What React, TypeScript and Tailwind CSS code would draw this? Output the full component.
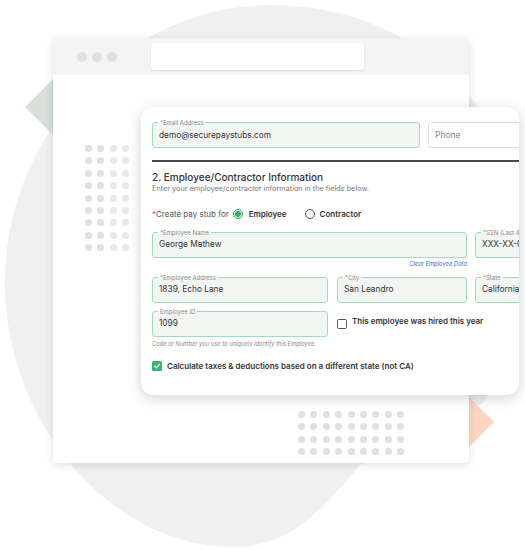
import React from "react";

const font = { fontFamily: "Inter, 'Noto Sans', sans-serif" };

const Field = ({
  label,
  value,
  width,
}: {
  label: string;
  value: string;
  width: string;
}) => {
  return (
    <div
      className={`relative h-[26px] shrink-0 rounded-[3px] border border-[#9fdcbd] bg-[#f2f6f2] flex items-center pl-[6px] ${width}`}
    >
      <span className="absolute -top-[4px] left-[5px] px-[2px] text-[6px] leading-[7px] text-[#8a8a8a] bg-[linear-gradient(to_bottom,#ffffff_55%,#f2f6f2_55%)] whitespace-nowrap">
        {label}
      </span>
      <span className="text-[8.3px] text-[#333] whitespace-nowrap">{value}</span>
    </div>
  );
};

const Check = () => (
  <svg width="8" height="8" viewBox="0 0 10 10">
    <path d="M2 5.2 L4.2 7.3 L8.2 2.8" fill="none" stroke="#fff" strokeWidth="1.6" strokeLinecap="round" strokeLinejoin="round" />
  </svg>
);

const Dots = ({ cols, rows, light }: { cols: number; rows: number; light?: boolean }) => {
  const items = [];
  for (let r = 0; r < rows; r++) {
    for (let c = 0; c < cols; c++) {
      items.push(
        <span
          key={`${r}-${c}`}
          className={`w-[7px] h-[7px] rounded-full ${light && c > 1 ? "bg-[#e8e8e8]" : "bg-[#e0e0e0]"}`}
        />
      );
    }
  }
  return (
    <div
      className={`grid gap-x-[5.4px] gap-y-[5.4px] ${cols === 4 ? "grid-cols-4" : "grid-cols-9"}`}
    >
      {items}
    </div>
  );
};

export default function App() {
  return (
    <div className="relative w-[525px] h-[550px] overflow-hidden bg-white" style={font}>
      {/* backdrop shapes */}
      <svg className="absolute inset-0" width="525" height="550" viewBox="0 0 525 550">
        <path
          d="M270 5 C405 5 520 95 520 250 C520 320 505 365 483 403 L360 465 C322 510 290 547 233 547 C110 547 5 420 5 283 C5 130 130 5 270 5 Z"
          fill="#f0f0f0"
        />
        <path d="M25 107 L70 62 L115 107 L70 152 Z" fill="#d7e0da" />
        <path d="M494 422 L462 390 L430 422 L462 454 Z" fill="#fdd6c0" />
      </svg>

      {/* browser window */}
      <div className="absolute left-[53px] top-[38px] w-[416px] h-[425px] rounded-[4px] bg-white shadow-[0_2px_8px_rgba(0,0,0,0.12)] overflow-hidden">
        <div className="h-[37px] bg-[#f4f4f4] flex items-center pl-[24px]">
          <div className="flex gap-[5px]">
            <span className="w-[10px] h-[10px] rounded-full bg-[#e0e0e0]" />
            <span className="w-[10px] h-[10px] rounded-full bg-[#e0e0e0]" />
            <span className="w-[10px] h-[10px] rounded-full bg-[#e0e0e0]" />
          </div>
          <div className="ml-[34px] w-[213px] h-[27px] rounded-[4px] bg-white shadow-[0_1px_2px_rgba(0,0,0,0.1)]" />
        </div>
        <div className="absolute left-[32px] top-[107px]">
          <Dots cols={4} rows={9} light />
        </div>
        <div className="absolute left-[245px] top-[373px]">
          <Dots cols={9} rows={4} />
        </div>
      </div>

      {/* form card */}
      <div className="absolute left-[141px] top-[107px] w-[378px] h-[288px] rounded-[12px] bg-white shadow-[0_3px_14px_rgba(0,0,0,0.18)] overflow-hidden">
        <div className="w-[560px] pl-[11px] pt-[15px] text-[#333]">
          <div className="flex gap-[8px]">
            <Field label="*Email Address" value="demo@securepaystubs.com" width="w-[268px]" />
            <div className="h-[26px] w-[120px] shrink-0 rounded-[3px] border border-[#dcdcdc] bg-white flex items-center pl-[6px]">
              <span className="text-[8.5px] text-[#8a8a8a]">Phone</span>
            </div>
          </div>

          <div className="mt-[12px] h-[1.5px] bg-[#4a4a4a]" />

          <div className="mt-[9px] text-[10px] leading-[13px] font-medium text-[#333]">
            2. Employee/Contractor Information
          </div>
          <div className="text-[7.3px] leading-[9px] text-[#7a7a7a]">
            Enter your employee/contractor information in the fields below.
          </div>

          <div className="mt-[16px] h-[10px] flex items-center text-[8px]">
            <span className="text-[#555]">
              <span className="text-[#e53935]">*</span>Create pay stub for
            </span>
            <span className="ml-[4px] w-[10px] h-[10px] rounded-full border border-[#2fae65] flex items-center justify-center">
              <span className="w-[6px] h-[6px] rounded-full bg-[#2fae65]" />
            </span>
            <span className="ml-[6px] font-semibold text-[#333]">Employee</span>
            <span className="ml-[18px] w-[10px] h-[10px] rounded-full border border-[#555]" />
            <span className="ml-[5px] font-semibold text-[#333]">Contractor</span>
          </div>

          <div className="mt-[13px] flex gap-[8px]">
            <Field label="*Employee Name" value="George Mathew" width="w-[315px]" />
            <Field label="*SSN (Last 4 digits)" value="XXX-XX-0000" width="w-[120px]" />
          </div>
          <div className="mt-[2px] w-[315px] text-right text-[5.8px] leading-[8px] italic text-[#4a67c9]">
            Clear Employee Data
          </div>

          <div className="mt-[9px] flex">
            <Field label="*Employee Address" value="1839, Echo Lane" width="w-[176px]" />
            <div className="ml-[9px]">
              <Field label="*City" value="San Leandro" width="w-[130px]" />
            </div>
            <div className="ml-[8px]">
              <Field label="*State" value="California" width="w-[120px]" />
            </div>
          </div>

          <div className="mt-[8px] flex items-center">
            <Field label="Employee ID" value="1099" width="w-[176px]" />
            <span className="ml-[9px] w-[10px] h-[10px] rounded-[1.5px] border border-[#555] bg-white" />
            <span className="ml-[5px] text-[8px] font-semibold text-[#333] -mt-[6px]">
              This employee was hired this year
            </span>
          </div>
          <div className="mt-[3px] text-[5.8px] leading-[7px] italic text-[#8a8a8a]">
            Code or Number you use to uniquely identify this Employee.
          </div>

          <div className="mt-[14px] h-[10px] flex items-center">
            <span className="w-[10px] h-[10px] rounded-[1.5px] bg-[#3cb371] flex items-center justify-center">
              <Check />
            </span>
            <span className="ml-[5px] text-[8px] font-semibold text-[#333]">
              Calculate taxes &amp; deductions based on a different state (not CA)
            </span>
          </div>
        </div>
      </div>
    </div>
  );
}
